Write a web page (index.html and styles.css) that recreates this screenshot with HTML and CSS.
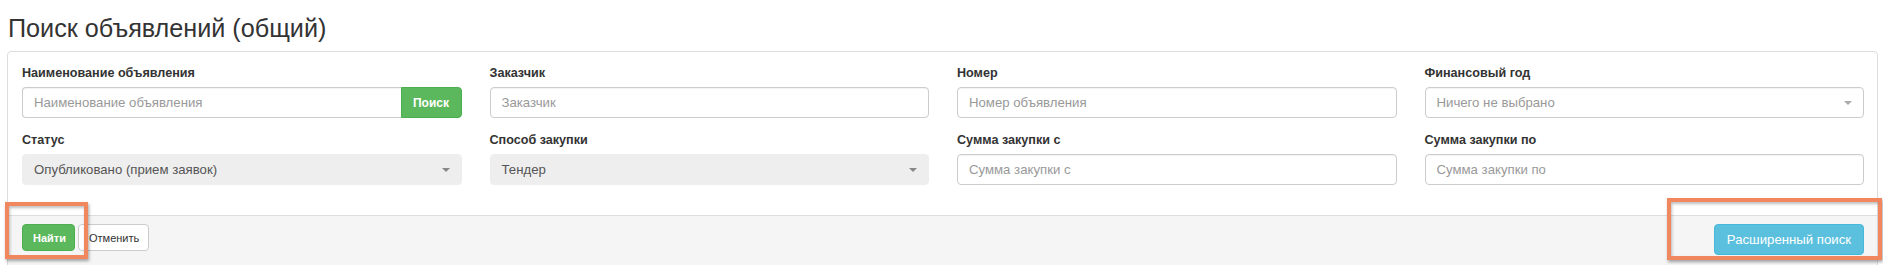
FILE: index.html
```html
<!DOCTYPE html>
<html lang="ru">
<head>
    <meta charset="UTF-8">
    <meta name="viewport" content="width=device-width, initial-scale=1.0">
    <title>Поиск объявлений</title>
    <link rel="stylesheet" href="styles.css">
</head>
<body>
    <div class="wrap">
        <h3 class="page-title">Поиск объявлений (общий)</h3>

        <!-- Search panel -->
        <div class="panel">
            <div class="panel-body">
                <div class="form-grid">
                    <div class="form-group">
                        <label>Наименование объявления</label>
                        <div class="input-group">
                            <input type="text" class="form-control" placeholder="Наименование объявления">
                            <button class="btn btn-success btn-addon">Поиск</button>
                        </div>
                    </div>
                    <div class="form-group">
                        <label>Заказчик</label>
                        <input type="text" class="form-control" placeholder="Заказчик">
                    </div>
                    <div class="form-group">
                        <label>Номер</label>
                        <input type="text" class="form-control" placeholder="Номер объявления">
                    </div>
                    <div class="form-group">
                        <label>Финансовый год</label>
                        <div class="select-box empty">Ничего не выбрано<span class="caret"></span></div>
                    </div>

                    <div class="form-group">
                        <label>Статус</label>
                        <div class="select-box readonly">Опубликовано (прием заявок)<span class="caret"></span></div>
                    </div>
                    <div class="form-group">
                        <label>Способ закупки</label>
                        <div class="select-box readonly">Тендер<span class="caret"></span></div>
                    </div>
                    <div class="form-group">
                        <label>Сумма закупки с</label>
                        <input type="text" class="form-control" placeholder="Сумма закупки с">
                    </div>
                    <div class="form-group">
                        <label>Сумма закупки по</label>
                        <input type="text" class="form-control" placeholder="Сумма закупки по">
                    </div>
                </div>
            </div>
            <div class="panel-footer">
                <div class="footer-left">
                    <button class="btn btn-success btn-sm">Найти</button>
                    <button class="btn btn-default btn-sm">Отменить</button>
                </div>
                <button class="btn btn-info">Расширенный поиск</button>
            </div>
        </div>

        <!-- highlight marks -->
        <div class="mark mark-find"></div>
        <div class="mark mark-advanced"></div>
    </div>
</body>
</html>
```

FILE: styles.css
```css
body {
    margin: 0;
    font-family: "Liberation Sans", Arial, sans-serif;
    color: #333;
    background-color: #fff;
}
.wrap {
    position: relative;
    height: 265px;
    overflow: hidden;
}
.page-title {
    margin: 15px 0 10px 8px;
    font-size: 25.2px;
    font-weight: normal;
    line-height: 26px;
    color: #333;
}
.panel {
    margin: 0 5px 0 7px;
    border: 1px solid #ddd;
    border-radius: 4px;
    background-color: #fff;
}
.panel-body {
    padding: 13px 13px 30px 14px;
}
.form-grid {
    display: grid;
    grid-template-columns: repeat(4, 1fr);
    column-gap: 28px;
    row-gap: 14px;
}
.form-group label {
    display: block;
    font-size: 12.6px;
    font-weight: bold;
    line-height: 17px;
    margin-bottom: 5px;
}
.form-control, .select-box {
    box-sizing: border-box;
    display: block;
    width: 100%;
    height: 31px;
    padding: 0 11px;
    font-family: inherit;
    font-size: 13.2px;
    color: #555;
    border: 1px solid #ccc;
    border-radius: 4px;
    background-color: #fff;
    box-shadow: inset 0 1px 1px rgba(0, 0, 0, 0.05);
}
.form-control::placeholder {
    color: #999;
}
.select-box {
    position: relative;
    line-height: 29px;
}
.select-box.empty {
    color: #999;
}
.select-box.readonly {
    background-color: #eee;
    border-color: #eee;
    box-shadow: none;
}
.caret {
    position: absolute;
    right: 11px;
    top: 13px;
    width: 0;
    height: 0;
    border-left: 4px solid transparent;
    border-right: 4px solid transparent;
    border-top: 4px solid #888;
}
.select-box.empty .caret {
    border-top-color: #aaa;
}
.input-group {
    display: flex;
}
.input-group .form-control {
    border-radius: 4px 0 0 4px;
    border-right: none;
}
.btn {
    font-family: inherit;
    border: 1px solid transparent;
    border-radius: 4px;
    cursor: pointer;
    white-space: nowrap;
}
.btn-addon {
    flex: none;
    width: 61px;
    height: 31px;
    padding: 0;
    font-size: 12px;
    font-weight: bold;
    border-radius: 0 4px 4px 0;
}
.btn-success {
    background-color: #5cb85c;
    border-color: #4cae4c;
    color: #fff;
}
.btn-default {
    background-color: #fff;
    border-color: #ccc;
    color: #333;
}
.btn-info {
    background-color: #5bc0de;
    border-color: #46b8da;
    color: #fff;
    height: 31px;
    padding: 0 12px;
    font-size: 13.2px;
}
.btn-sm {
    height: 27px;
    padding: 0 10px;
    font-size: 11px;
}
.btn-sm.btn-success {
    font-weight: bold;
    width: 53px;
}
.btn-sm.btn-default {
    width: 71px;
    margin-left: 3px;
}
.panel-footer {
    display: flex;
    justify-content: space-between;
    align-items: flex-start;
    padding: 8px 13px 20px 14px;
    background-color: #f5f5f5;
    border-top: 1px solid #ddd;
}
.footer-left {
    display: flex;
}
/* orange annotation frames */
.mark {
    position: absolute;
    box-sizing: border-box;
    border: 4px solid #f0875f;
    box-shadow: 1px 2px 3px rgba(0, 0, 0, 0.35), inset 1px 2px 3px rgba(0, 0, 0, 0.25);
}
.mark-find {
    left: 5px;
    top: 202px;
    width: 83px;
    height: 57px;
}
.mark-advanced {
    left: 1667px;
    top: 198px;
    width: 215px;
    height: 62px;
}
```
